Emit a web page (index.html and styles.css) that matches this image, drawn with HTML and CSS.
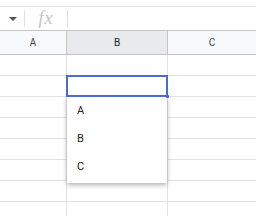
FILE: index.html
```html
<!DOCTYPE html>
<html lang="en">
<head>
  <meta charset="UTF-8" />
  <title>Sheet</title>
  <link rel="stylesheet" href="styles.css">
</head>
<body>
  <div class="sheet">
    <div class="toolbar"></div>

    <div class="formula-bar">
      <div class="name-box"><span class="caret"></span></div>
      <div class="fx">fx</div>
      <div class="formula-input"></div>
    </div>

    <div class="row header">
      <div class="cell">A</div>
      <div class="cell active">B</div>
      <div class="cell">C</div>
    </div>

    <div class="grid">
      <div class="row"><div class="cell"></div><div class="cell"></div><div class="cell"></div></div>
      <div class="row"><div class="cell"></div><div class="cell"></div><div class="cell"></div></div>
      <div class="row"><div class="cell"></div><div class="cell"></div><div class="cell"></div></div>
      <div class="row"><div class="cell"></div><div class="cell"></div><div class="cell"></div></div>
      <div class="row"><div class="cell"></div><div class="cell"></div><div class="cell"></div></div>
      <div class="row"><div class="cell"></div><div class="cell"></div><div class="cell"></div></div>
      <div class="row"><div class="cell"></div><div class="cell"></div><div class="cell"></div></div>
      <div class="row"><div class="cell"></div><div class="cell"></div><div class="cell"></div></div>

      <div class="selection"><span class="handle"></span></div>
      <ul class="dropdown">
        <li>A</li>
        <li>B</li>
        <li>C</li>
      </ul>
    </div>
  </div>
</body>
</html>
```

FILE: styles.css
```css
body {
  margin: 0;
  padding: 0;
  background: #fff;
  font-family: Roboto, "Liberation Sans", Arial, sans-serif;
  color: #222;
  overflow: hidden;
}

.sheet {
  width: 256px;
  height: 216px;
  overflow: hidden;
}

.toolbar {
  height: 6px;
  border-bottom: 1px solid #e3e3e3;
}

.formula-bar {
  height: 23px;
  display: flex;
  align-items: center;
  border-bottom: 1px solid #c4c4c4;
}

.name-box {
  width: 24px;
  height: 17px;
  border-right: 1px solid #e0e0e0;
  display: flex;
  justify-content: center;
  align-items: center;
}

.caret {
  width: 0;
  height: 0;
  margin-left: 1px;
  border-left: 4px solid transparent;
  border-right: 4px solid transparent;
  border-top: 4px solid #555;
}

.fx {
  width: 42px;
  height: 17px;
  line-height: 17px;
  border-right: 1px solid #e0e0e0;
  font-family: "Liberation Serif", "Times New Roman", serif;
  font-style: italic;
  font-size: 18px;
  color: #c4c4c4;
  text-align: center;
  letter-spacing: 1px;
}

.formula-input {
  flex: 1;
}

.row {
  display: grid;
  grid-template-columns: 67px 101px 1fr;
  height: 21px;
}

.cell {
  border-right: 1px solid #e2e2e2;
  border-bottom: 1px solid #e2e2e2;
}

.row .cell:last-child {
  border-right: none;
}

.header {
  height: 24px;
  background: #f8f9fa;
}

.header .cell {
  display: flex;
  justify-content: center;
  align-items: center;
  font-size: 10px;
  color: #444;
  border-right-color: #c4c4c4;
  border-bottom-color: #c4c4c4;
}

.header .cell.active {
  background: #e8eaed;
  color: #222;
}

.grid {
  position: relative;
}

.selection {
  position: absolute;
  left: 66px;
  top: 20px;
  width: 98px;
  height: 18px;
  border: 2px solid #4c6bd2;
  z-index: 2;
}

.handle {
  position: absolute;
  right: -3px;
  bottom: -3px;
  width: 3px;
  height: 3px;
  background: #4c6bd2;
}

.dropdown {
  position: absolute;
  left: 67px;
  top: 42px;
  width: 100px;
  margin: 0;
  padding: 0 0 2px;
  list-style: none;
  background: #fff;
  box-shadow: 0 2px 5px rgba(0, 0, 0, 0.3);
  z-index: 1;
}

.dropdown li {
  height: 28px;
  line-height: 28px;
  padding-left: 10px;
  font-size: 11px;
  color: #222;
}
```
